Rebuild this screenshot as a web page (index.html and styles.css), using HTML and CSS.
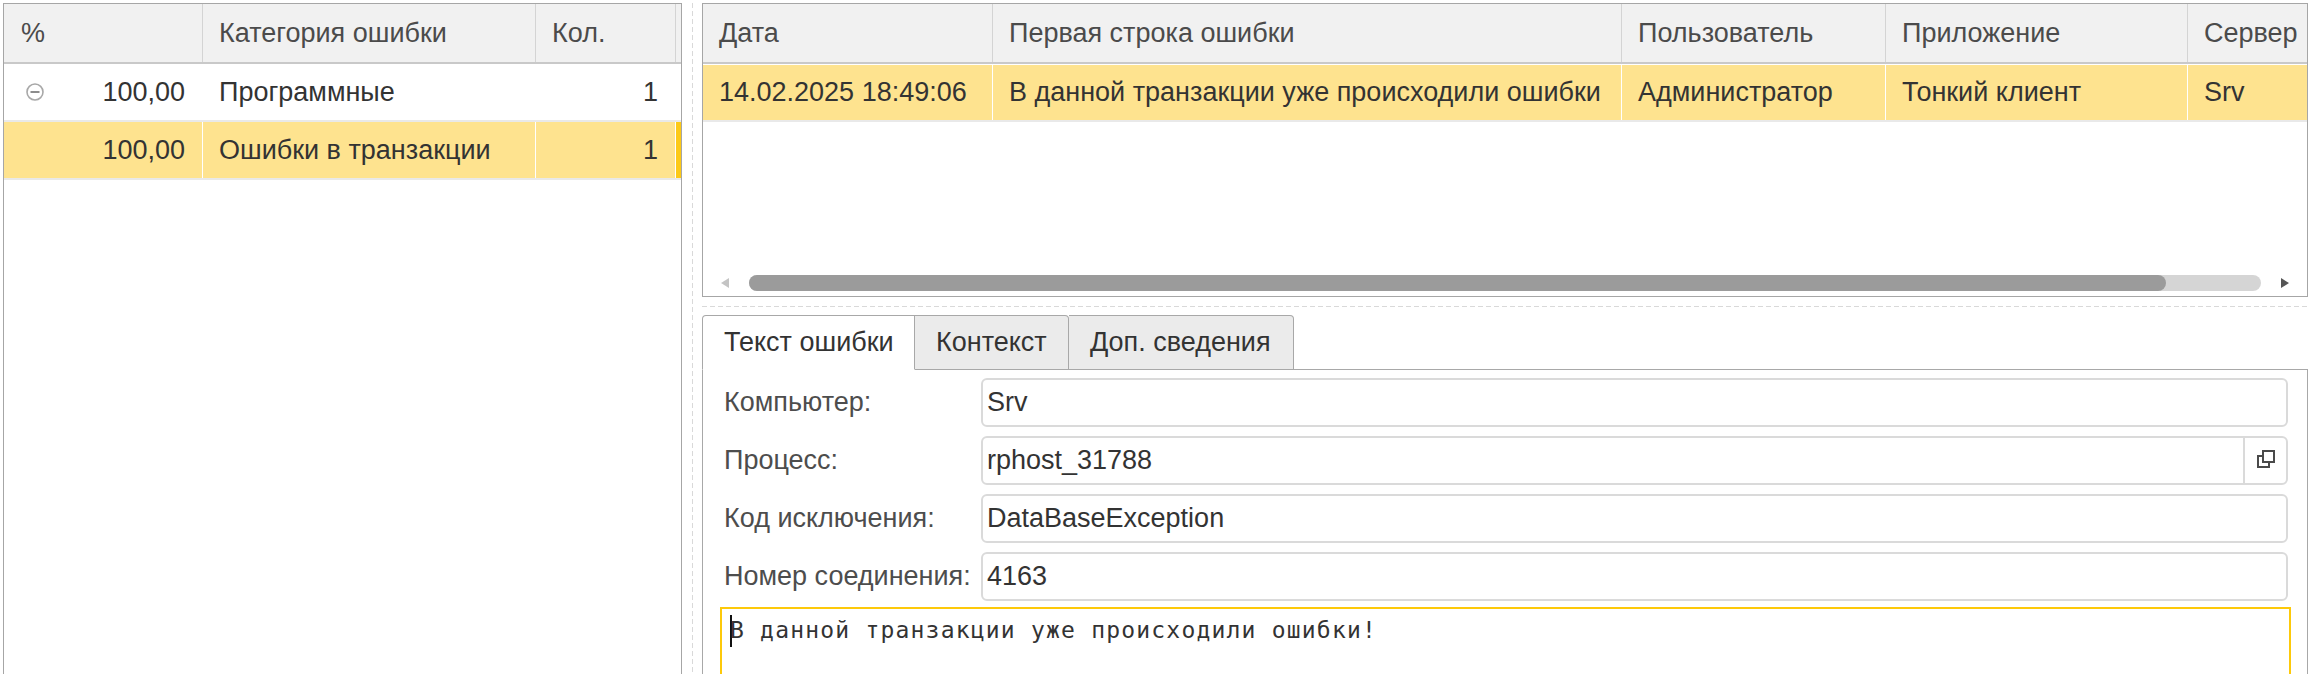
FILE: index.html
```html
<!DOCTYPE html>
<html lang="ru">
<head>
<meta charset="utf-8">
<title>Ошибки</title>
<link rel="stylesheet" href="styles.css">
</head>
<body>
<div class="layout">
  <section class="panel left-panel">
    <div class="row head cols-left">
      <div class="cell">%</div>
      <div class="cell">Категория ошибки</div>
      <div class="cell">Кол.</div>
      <div class="cell cell-strip"></div>
    </div>
    <div class="row body cols-left">
      <div class="cell cell-num">
        <svg class="tree-icon" width="18" height="18" viewBox="0 0 18 18"><circle cx="9" cy="9" r="8" fill="none" stroke="#a8a8a8" stroke-width="1.6"/><rect x="4.5" y="8" width="9" height="2" fill="#8c8c8c"/></svg>
        <span>100,00</span>
      </div>
      <div class="cell">Программные</div>
      <div class="cell cell-right">1</div>
      <div class="cell cell-strip"></div>
    </div>
    <div class="row body selected cols-left">
      <div class="cell cell-num"><span>100,00</span></div>
      <div class="cell">Ошибки в транзакции</div>
      <div class="cell cell-right">1</div>
      <div class="cell cell-strip cell-mark"></div>
    </div>
  </section>

  <div class="v-split"></div>

  <main class="right">
    <section class="panel top-grid">
      <div class="row head cols-right">
        <div class="cell">Дата</div>
        <div class="cell">Первая строка ошибки</div>
        <div class="cell">Пользователь</div>
        <div class="cell">Приложение</div>
        <div class="cell cell-end">Сервер</div>
      </div>
      <div class="row body selected gap-top cols-right">
        <div class="cell">14.02.2025 18:49:06</div>
        <div class="cell">В данной транзакции уже происходили ошибки</div>
        <div class="cell">Администратор</div>
        <div class="cell">Тонкий клиент</div>
        <div class="cell cell-end">Srv</div>
      </div>
      <div class="spacer"></div>
      <div class="scrollbar">
        <svg class="arrow arrow-left" width="8" height="10" viewBox="0 0 8 10"><path d="M8 0V10L0 5Z" fill="#c4c4c4"/></svg>
        <div class="track"><div class="thumb"></div></div>
        <svg class="arrow arrow-right" width="8" height="10" viewBox="0 0 8 10"><path d="M0 0V10L8 5Z" fill="#555"/></svg>
      </div>
    </section>

    <div class="h-split"><div class="h-dash"></div></div>

    <div class="tabs">
      <div class="tab tab-active tab-first">Текст ошибки</div>
      <div class="tab tab-second">Контекст</div>
      <div class="tab tab-third">Доп. сведения</div>
    </div>

    <section class="tab-body">
      <div class="field">
        <label class="field-label">Компьютер:</label>
        <div class="input"><span class="input-text">Srv</span></div>
      </div>
      <div class="field">
        <label class="field-label">Процесс:</label>
        <div class="input">
          <span class="input-text">rphost_31788</span>
          <div class="input-btn">
            <svg width="18" height="18" viewBox="0 0 18 18"><path d="M6 1H17V12H6Z M5 6H1V17H12V13" fill="none" stroke="#4a4a4a" stroke-width="2"/></svg>
          </div>
        </div>
      </div>
      <div class="field">
        <label class="field-label">Код исключения:</label>
        <div class="input"><span class="input-text">DataBaseException</span></div>
      </div>
      <div class="field">
        <label class="field-label">Номер соединения:</label>
        <div class="input"><span class="input-text">4163</span></div>
      </div>
      <div class="memo"><span class="caret"></span>В данной транзакции уже происходили ошибки!</div>
    </section>
  </main>
</div>
</body>
</html>
```

FILE: styles.css
```css
* { box-sizing: border-box; }
html, body { margin: 0; height: 100%; background: #fff; overflow: hidden; }
body { font-family: "Liberation Sans", Arial, sans-serif; font-size: 27px; color: #333; }

.layout { display: flex; height: 674px; padding: 3px 0 0 3px; }

.panel { border: 1px solid #a6a6a6; background: #fff; }
.left-panel { width: 679px; flex: none; border-bottom: 0; }

.row { display: grid; }
.cols-left { grid-template-columns: 199px 333px 140px 5px; }
.cols-right { grid-template-columns: 290px 629px 264px 302px 119px; }

.head { height: 60px; background: #f1f1f1; border-bottom: 2px solid #c9c9c9; color: #4b4b4b; }
.body { height: 58px; border-bottom: 2px solid #e9e9e9; }
.gap-top { height: 58px; border-top: 1px solid #fff; }

.cell { display: flex; align-items: center; padding-left: 16px; border-right: 1px solid #d4d4d4; overflow: hidden; white-space: nowrap; }
.cols-left .cell:first-child { padding-left: 17px; }
.body .cell { border-right-color: transparent; }
.selected .cell { background: #fee38f; border-right-color: #fff; }
.cell-end { border-right: 0; }
.cell-strip { border-right: 0; padding: 0; }
.cell-right { justify-content: flex-end; padding-right: 17px; }
.cell-num { justify-content: space-between; padding-right: 17px; }
.selected .cell-num { justify-content: flex-end; }
.selected .cell-mark { background: #fcc917; }

.tree-icon { flex: none; margin-left: 5px; }

.v-split { width: 20px; flex: none; background: repeating-linear-gradient(to bottom, #d9d9d9 0 5px, #fff 5px 8px) 10px 0 / 1px 100% no-repeat; }

.right { width: 1606px; flex: none; display: flex; flex-direction: column; }

.top-grid { height: 294px; flex: none; display: flex; flex-direction: column; overflow: hidden; }
.spacer { flex: 1; }

.scrollbar { height: 16px; margin-bottom: 5px; display: flex; align-items: center; padding-left: 18px; }
.arrow { flex: none; }
.track { width: 1512px; height: 16px; margin-left: 20px; background: #d5d5d5; border-radius: 8px; flex: none; }
.thumb { width: 1417px; height: 16px; background: #9b9b9b; border-radius: 8px; }
.arrow-right { margin-left: 20px; }

.h-split { height: 18px; flex: none; display: flex; align-items: center; }
.h-dash { width: 100%; height: 1px; background: repeating-linear-gradient(to right, #d9d9d9 0 5px, #fff 5px 8px); }

.tabs { display: flex; height: 55px; flex: none; margin-bottom: -1px; }
.tab { display: flex; align-items: center; border: 1px solid #a8a8a8; border-left: 0; background: #ebebeb; border-radius: 0 4px 0 0; padding-left: 21px; }
.tab-first { width: 213px; }
.tab-second { width: 154px; }
.tab-third { width: 225px; }
.tab-active { position: relative; z-index: 1; background: #fff; border-left: 1px solid #a8a8a8; border-bottom-color: #fff; border-radius: 4px 0 0 0; }

.tab-body { flex: 1; border: 1px solid #a8a8a8; border-bottom: 0; padding: 8px 19px 0 17px; display: flex; flex-direction: column; gap: 9px; }

.field { display: flex; align-items: center; height: 49px; flex: none; color: #4d4d4d; }
.field-label { width: 261px; flex: none; padding-left: 4px; white-space: nowrap; }
.input { flex: 1; height: 49px; border: 2px solid #dadada; border-radius: 6px; display: flex; align-items: center; color: #333; }
.input-text { flex: 1; padding-left: 4px; }
.input-btn { width: 43px; height: 100%; border-left: 2px solid #dadada; display: flex; align-items: center; justify-content: center; padding-bottom: 3px; }

.memo { flex: 1; margin: -3px -3px 0 0; border: 2px solid #fdc90a; border-bottom: 0; padding: 6px 0 0 8px; font-family: "DejaVu Sans Mono", monospace; font-size: 23px; letter-spacing: 1.2px; white-space: pre; line-height: 28px; color: #333; }
.caret { display: inline-block; width: 2px; height: 32px; background: #111; margin-right: -2px; vertical-align: -9px; }
```
